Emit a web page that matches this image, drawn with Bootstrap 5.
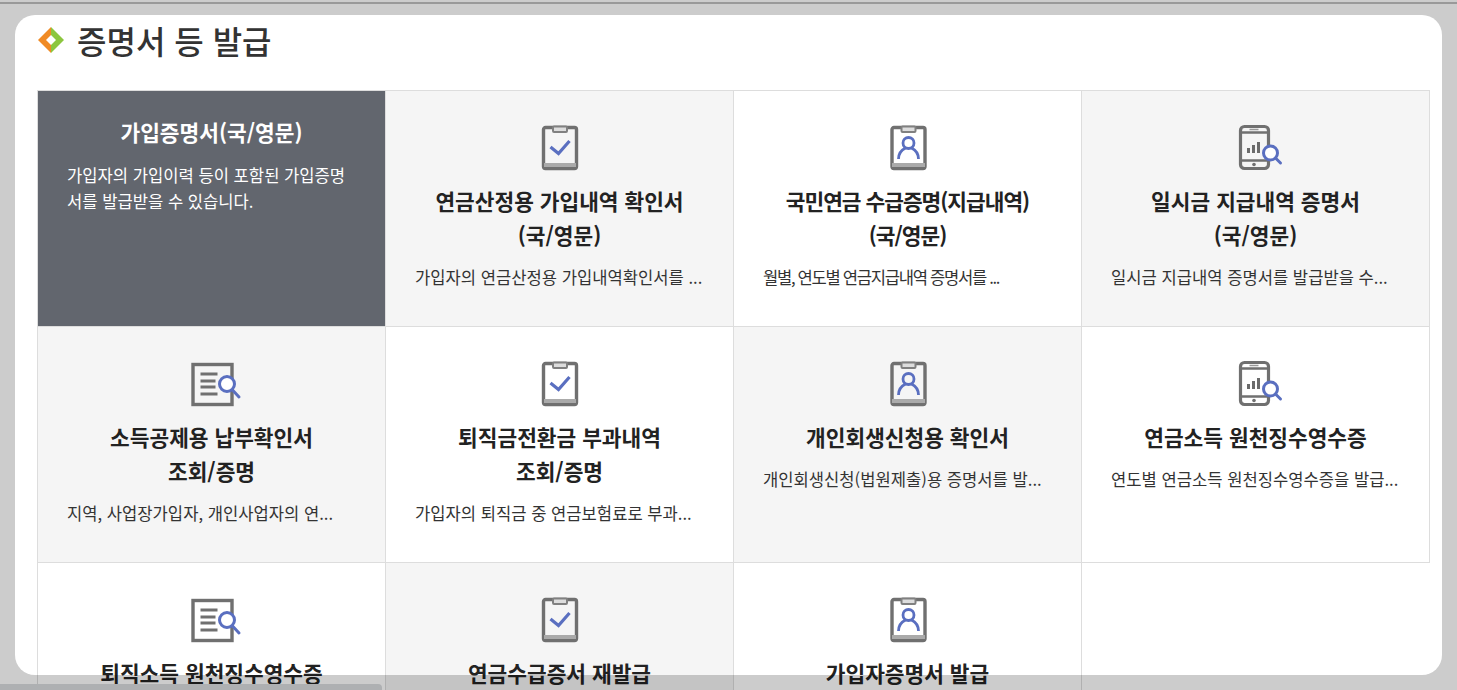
<!DOCTYPE html>
<html lang="ko">
<head>
<meta charset="utf-8">
<title>증명서 등 발급</title>
<link rel="stylesheet" href="https://cdn.jsdelivr.net/npm/bootstrap@5.3.0/dist/css/bootstrap.min.css">
<style>
html,body{height:100%;overflow:hidden}
body{background:#ccc;font-family:"Noto Sans CJK KR","Noto Sans",sans-serif;color:#222}
.top-rule{height:2px;margin-top:2px;background:#999}
.sheet{position:absolute;left:15px;top:15px;width:1427px;height:660px;background:#fff;border-radius:20px;padding:0 12px 0 22px}
.sheet-title{height:75px;gap:12px;font-size:32px;line-height:1;font-weight:500;color:#333;margin:0;padding-bottom:25px}
.cert-grid{display:grid;grid-template-columns:repeat(4,348px);grid-auto-rows:236px;width:1393px}
.cert-cell{border:1px solid #ddd;margin:0 -1px -1px 0;padding:34px 29px 0;text-align:center;background:#fff;overflow:hidden}
.cert-cell.shade{background:#f5f5f5}
.cert-cell.active{background:#62666e;color:#fff;padding-top:24px}
.cert-ico{display:block;margin:0 auto;width:50px;height:46px;overflow:visible}
.cert-name{font-size:21.4px;line-height:34px;font-weight:700;color:#222;margin:13px 0 0}
.cert-cell.active .cert-name{color:#fff;margin:0}
.cert-desc{font-size:16.6px;line-height:26px;text-align:left;margin:12px 0 0;color:#333;white-space:nowrap}
.cert-cell.active .cert-desc{color:#fff;white-space:normal;word-break:break-all;margin-top:13px}
.cert-cell.tight .cert-name{letter-spacing:-1px}
.cert-cell.tight .cert-desc{letter-spacing:-1.3px}
.dim-strip{position:absolute;left:37px;top:675px;width:1045px;height:15px;background:rgba(0,0,0,.2)}
.thumb{position:absolute;left:0;top:684px;width:382px;height:6px;background:#aeb0b2;border-radius:0 4px 0 0}
</style>
</head>
<body>
<svg width="0" height="0" class="position-absolute">
<defs>
<symbol id="i-check" viewBox="0 0 50 46" overflow="visible"><rect x="8.500" y="2.500" width="33" height="41" rx="2" fill="none" stroke="#707070" stroke-width="3.400"/><rect x="9" y="38" width="32" height="4" fill="#aaa"/><rect x="18" y="1.500" width="14" height="5.500" rx="1" fill="#ddd" stroke="#808080" stroke-width="2"/><path d="M15.500 22l8 6.500 11-12.500" fill="none" stroke="#5a6fc0" stroke-width="3.200"/></symbol>
<symbol id="i-person" viewBox="0 0 50 46" overflow="visible"><rect x="9" y="2.500" width="33" height="41" rx="2" fill="none" stroke="#707070" stroke-width="3.400"/><rect x="9" y="38" width="33" height="4" fill="#aaa"/><rect x="18.500" y="1.500" width="14" height="5.500" rx="1" fill="#ddd" stroke="#808080" stroke-width="2"/><circle cx="25.500" cy="18" r="5.500" fill="none" stroke="#5a6fc0" stroke-width="2.800"/><path d="M15.500 34c0-5 3-9 7-11M35.500 34c0-5-3-9-7-11" fill="none" stroke="#5a6fc0" stroke-width="2.800"/></symbol>
<symbol id="i-phone" viewBox="0 0 50 46" overflow="visible"><rect x="9.500" y="1.500" width="28" height="42" rx="4" fill="none" stroke="#707070" stroke-width="3.200"/><path d="M9.500 7.500h28M9.500 35.500h28" stroke="#707070" stroke-width="2.400"/><path d="M18.500 4.500h9" stroke="#999" stroke-width="1.500"/><circle cx="23" cy="39.500" r="1.800" fill="#707070"/><path d="M17.500 28v-5M22.500 28v-8M27.500 28v-11" stroke="#6b6b6b" stroke-width="3"/><circle cx="39.500" cy="28" r="7" fill="#fff" stroke="#5a6fc0" stroke-width="3"/><path d="M44.500 33l5 5" stroke="#5a6fc0" stroke-width="3" stroke-linecap="round"/></symbol>
<symbol id="i-doc" viewBox="0 0 50 46" overflow="visible"><rect x="6" y="3.500" width="39" height="40" fill="none" stroke="#707070" stroke-width="3.400"/><path d="M13.500 13h17M13.500 20h15M13.500 26h15M13.500 33h17" stroke="#707070" stroke-width="2.800"/><circle cx="40" cy="23" r="7.500" fill="#fff" stroke="#5a6fc0" stroke-width="3"/><path d="M45.500 29l6.500 7" stroke="#5a6fc0" stroke-width="3" stroke-linecap="round"/></symbol>
</defs>
</svg>
<div class="top-rule"></div>
<main class="sheet">
<h1 class="sheet-title d-flex align-items-center">
<svg width="28" height="28" viewBox="0 0 28 28" aria-hidden="true"><path d="M14 1L1 14l13 13z" fill="#f08a24"/><path d="M14 1l13 13H14z" fill="#8cc63f"/><path d="M27 14L14 27V14z" fill="#8cc63f"/><path d="M14 9l5 5-5 5-5-5z" fill="#fff"/></svg>
<span>증명서 등 발급</span>
</h1>
<div class="cert-grid">
<div class="cert-cell active"><p class="cert-name">가입증명서(국/영문)</p><p class="cert-desc">가입자의 가입이력 등이 포함된 가입증명서를 발급받을 수 있습니다.</p></div>
<div class="cert-cell shade"><svg class="cert-ico"><use href="#i-check"/></svg><p class="cert-name">연금산정용 가입내역 확인서<br>(국/영문)</p><p class="cert-desc">가입자의 연금산정용 가입내역확인서를 ...</p></div>
<div class="cert-cell tight"><svg class="cert-ico"><use href="#i-person"/></svg><p class="cert-name">국민연금 수급증명(지급내역)<br>(국/영문)</p><p class="cert-desc">월별, 연도별 연금지급내역 증명서를 ...</p></div>
<div class="cert-cell shade"><svg class="cert-ico"><use href="#i-phone"/></svg><p class="cert-name">일시금 지급내역 증명서<br>(국/영문)</p><p class="cert-desc">일시금 지급내역 증명서를 발급받을 수...</p></div>
<div class="cert-cell shade"><svg class="cert-ico"><use href="#i-doc"/></svg><p class="cert-name">소득공제용 납부확인서<br>조회/증명</p><p class="cert-desc">지역, 사업장가입자, 개인사업자의 연...</p></div>
<div class="cert-cell"><svg class="cert-ico"><use href="#i-check"/></svg><p class="cert-name">퇴직금전환금 부과내역<br>조회/증명</p><p class="cert-desc">가입자의 퇴직금 중 연금보험료로 부과...</p></div>
<div class="cert-cell shade"><svg class="cert-ico"><use href="#i-person"/></svg><p class="cert-name">개인회생신청용 확인서</p><p class="cert-desc">개인회생신청(법원제출)용 증명서를 발...</p></div>
<div class="cert-cell"><svg class="cert-ico"><use href="#i-phone"/></svg><p class="cert-name">연금소득 원천징수영수증</p><p class="cert-desc">연도별 연금소득 원천징수영수증을 발급...</p></div>
<div class="cert-cell"><svg class="cert-ico"><use href="#i-doc"/></svg><p class="cert-name">퇴직소득 원천징수영수증</p></div>
<div class="cert-cell shade"><svg class="cert-ico"><use href="#i-check"/></svg><p class="cert-name">연금수급증서 재발급</p></div>
<div class="cert-cell"><svg class="cert-ico"><use href="#i-person"/></svg><p class="cert-name">가입자증명서 발급</p></div>
</div>
</main>
<div class="dim-strip"></div>
<div class="thumb"></div>
<script src="https://cdn.jsdelivr.net/npm/bootstrap@5.3.0/dist/js/bootstrap.bundle.min.js"></script>
</body>
</html>
